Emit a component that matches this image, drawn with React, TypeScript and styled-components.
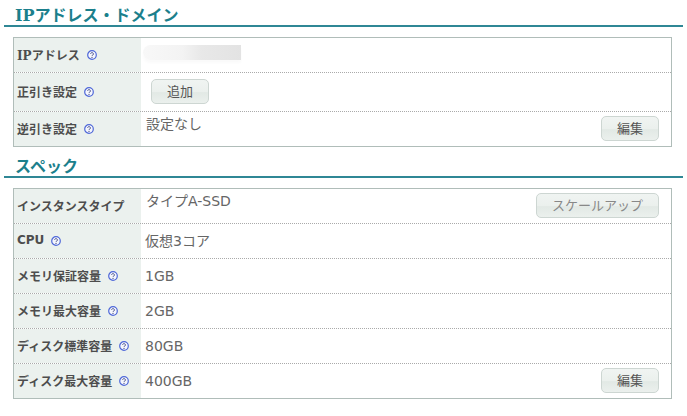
import * as React from 'react'
import styled, { createGlobalStyle } from 'styled-components'

const GlobalStyle = createGlobalStyle`
  html, body {
    margin: 0;
    padding: 0;
    background: #fff;
  }
  body {
    font-family: "DejaVu Sans", "Noto Sans CJK JP", sans-serif;
    color: #555;
  }
`

const Page = styled.div`
  width: 687px;
  height: 416px;
  padding: 3px 4px 0;
  box-sizing: border-box;
  overflow: hidden;
`

const Heading = styled.h2<{ $gap?: number }>`
  margin: ${ ({ $gap }) => $gap ?? 0 }px 0 0;
  height: 20px;
  padding: 2px 0 0 11px;
  font-size: 16px;
  line-height: 22px;
  font-weight: bold;
  color: #1b7f8c;
  border-bottom: 2px solid #2f8795;
  box-sizing: content-box;
`

const SerifLatin = styled.span`
  font-family: "DejaVu Serif", serif;
`

const Table = styled.div`
  margin: 10px 11px 0 9px;
  border: 1px solid #b0bdb9;
`

const Row = styled.div<{ $height: number }>`
  display: flex;
  height: ${ ({ $height }) => $height }px;
  border-bottom: 1px dotted #aaa;
  box-sizing: border-box;

  &:last-child {
    border-bottom: none;
  }
`

const LabelCell = styled.div`
  flex: 0 0 127px;
  display: flex;
  align-items: center;
  gap: 7px;
  padding: 0 0 2px 3px;
  box-sizing: border-box;
  background: #ebf1ee;
  font-size: 12px;
  font-weight: bold;
  color: #4d4d4d;
  white-space: nowrap;
`

const ValueCell = styled.div<{ $top?: boolean }>`
  flex: 1;
  display: flex;
  align-items: ${ ({ $top }) => ($top ? 'flex-start' : 'center') };
  justify-content: space-between;
  padding: 0 12px 0 4px;
  font-size: 14px;
  line-height: 20px;
  color: #666;
`

const TopText = styled.span`
  padding: 2px 0 0 1px;
`

const Button = styled.button<{ $width: number; $left?: number; $top?: number; $muted?: boolean }>`
  width: ${ ({ $width }) => $width }px;
  height: 25px;
  margin: ${ ({ $top }) => $top ?? 0 }px 0 0 ${ ({ $left }) => $left ?? 0 }px;
  padding: 0 0 2px;
  border: 1px solid #cdd6d2;
  border-radius: 5px;
  background: linear-gradient(#f0f4f2 0%, #ebf0ed 50%, #e2e9e5 55%, #ebf0ed 100%);
  font-family: inherit;
  font-size: 13px;
  color: ${ ({ $muted }) => ($muted ? '#888' : '#555') };
`

const Masked = styled.div`
  width: 98px;
  height: 15px;
  margin: -5px 0 0 -2px;
  border-radius: 8px 0 0 8px;
  background: linear-gradient(90deg, #f8f8f8 0%, #f3f3f3 40%, #e8e8e8 60%, #e3e3e3 100%);
  box-shadow: 0 3px 3px #fafafa;
`

const HelpIcon = styled.svg`
  margin-top: 2px;
  flex: none;
`

const Help = () => (
  <HelpIcon width="10" height="10" viewBox="0 0 10 10" aria-hidden="true">
    <circle cx="5" cy="5" r="4.3" fill="#f4f6fd" stroke="#4f68d8" strokeWidth="1.2" />
    <path d="M3.6 3.9a1.4 1.3 0 1 1 2.2 1.1c-.5.3-.8.5-.8 1" fill="none" stroke="#3c437e" strokeWidth="0.9" />
    <circle cx="5" cy="7.4" r="0.55" fill="#3c437e" />
  </HelpIcon>
)

export default function App() {
  return (
    <Page>
      <GlobalStyle />
      <Heading><SerifLatin>IP</SerifLatin>アドレス・ドメイン</Heading>
      <Table>
        <Row $height={35}>
          <LabelCell><span><SerifLatin>IP</SerifLatin>アドレス</span><Help /></LabelCell>
          <ValueCell><Masked /></ValueCell>
        </Row>
        <Row $height={39}>
          <LabelCell>正引き設定<Help /></LabelCell>
          <ValueCell><Button $width={58} $left={6} $top={-1}>追加</Button></ValueCell>
        </Row>
        <Row $height={34}>
          <LabelCell>逆引き設定<Help /></LabelCell>
          <ValueCell $top><TopText>設定なし</TopText><Button $width={58} $top={4}>編集</Button></ValueCell>
        </Row>
      </Table>
      <Heading $gap={7}>スペック</Heading>
      <Table>
        <Row $height={35}>
          <LabelCell>インスタンスタイプ</LabelCell>
          <ValueCell $top><TopText>タイプA-SSD</TopText><Button $width={123} $top={4} $muted>スケールアップ</Button></ValueCell>
        </Row>
        <Row $height={35}>
          <LabelCell>CPU<Help /></LabelCell>
          <ValueCell>仮想3コア</ValueCell>
        </Row>
        <Row $height={35}>
          <LabelCell>メモリ保証容量<Help /></LabelCell>
          <ValueCell>1GB</ValueCell>
        </Row>
        <Row $height={35}>
          <LabelCell>メモリ最大容量<Help /></LabelCell>
          <ValueCell>2GB</ValueCell>
        </Row>
        <Row $height={35}>
          <LabelCell>ディスク標準容量<Help /></LabelCell>
          <ValueCell>80GB</ValueCell>
        </Row>
        <Row $height={34}>
          <LabelCell>ディスク最大容量<Help /></LabelCell>
          <ValueCell>400GB<Button $width={58} $top={-1}>編集</Button></ValueCell>
        </Row>
      </Table>
    </Page>
  )
}
